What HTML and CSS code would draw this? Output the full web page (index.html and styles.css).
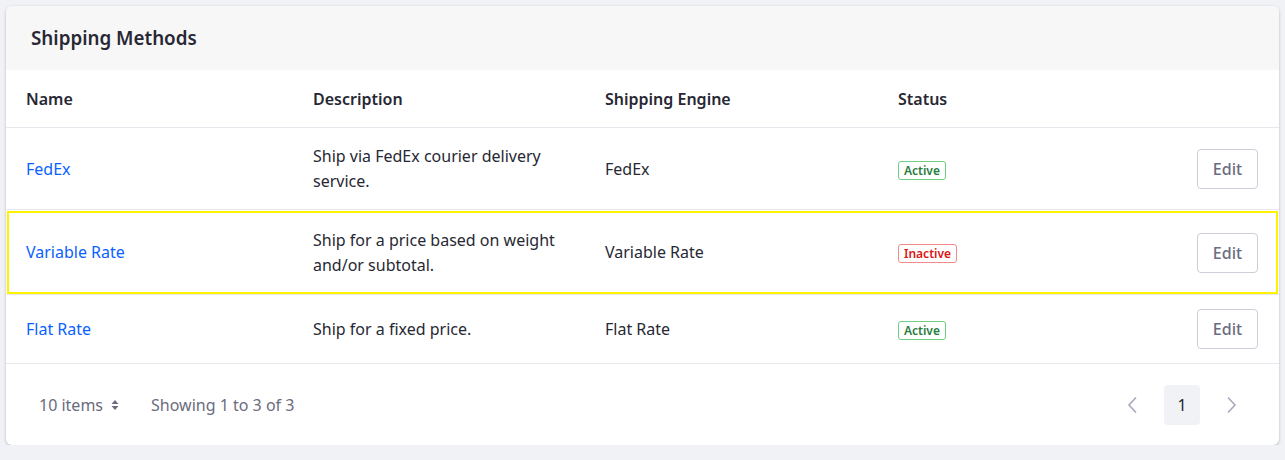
FILE: index.html
```html
<!DOCTYPE html>
<html lang="en">
<head>
<meta charset="utf-8">
<title>Shipping Methods</title>
<link rel="stylesheet" href="styles.css">
</head>
<body>
<div class="card">
  <div class="card-header">
    <h2 class="card-title">Shipping Methods</h2>
  </div>
  <div class="table">
    <div class="row row-head">
      <div class="cell">Name</div>
      <div class="cell">Description</div>
      <div class="cell">Shipping Engine</div>
      <div class="cell">Status</div>
      <div class="cell"></div>
    </div>
    <div class="row row-tall">
      <div class="cell"><a class="link" href="#">FedEx</a></div>
      <div class="cell">Ship via FedEx courier delivery service.</div>
      <div class="cell">FedEx</div>
      <div class="cell"><span class="badge badge-success">Active</span></div>
      <div class="cell cell-action"><button class="btn">Edit</button></div>
    </div>
    <div class="row row-tall row-focus">
      <div class="cell"><a class="link" href="#">Variable Rate</a></div>
      <div class="cell">Ship for a price based on weight and/or subtotal.</div>
      <div class="cell">Variable Rate</div>
      <div class="cell"><span class="badge badge-danger">Inactive</span></div>
      <div class="cell cell-action"><button class="btn">Edit</button></div>
    </div>
    <div class="row row-short">
      <div class="cell"><a class="link" href="#">Flat Rate</a></div>
      <div class="cell">Ship for a fixed price.</div>
      <div class="cell">Flat Rate</div>
      <div class="cell"><span class="badge badge-success">Active</span></div>
      <div class="cell cell-action"><button class="btn">Edit</button></div>
    </div>
  </div>
  <div class="card-footer">
    <div class="footer-left">
      <span class="items">10 items
        <svg class="caret" width="8" height="12" viewBox="0 0 8 12"><path d="M4 1 L7.5 5 H0.5 Z M4 11 L0.5 7 H7.5 Z" fill="#6b6c7e"/></svg>
      </span>
      <span class="showing">Showing 1 to 3 of 3</span>
    </div>
    <div class="pagination">
      <span class="page-nav">
        <svg width="14" height="20" viewBox="0 0 14 20"><path d="M11 2.5 L4 10 L11 17.5" fill="none" stroke="#a7a9bc" stroke-width="1.6"/></svg>
      </span>
      <span class="page-item">1</span>
      <span class="page-nav">
        <svg width="14" height="20" viewBox="0 0 14 20"><path d="M3 2.5 L10 10 L3 17.5" fill="none" stroke="#a7a9bc" stroke-width="1.6"/></svg>
      </span>
    </div>
  </div>
</div>
</body>
</html>
```

FILE: styles.css
```css
* { box-sizing: border-box; }
html, body { margin: 0; padding: 0; }
body {
  background: #f1f2f5;
  font-family: "Noto Sans", "Open Sans", sans-serif;
  font-size: 16px;
  color: #272833;
  padding: 6px 6px 0 6px;
}
.card {
  background: #fff;
  border-radius: 6px;
  box-shadow: 0 1px 3px rgba(0,0,0,0.25);
  overflow: hidden;
  width: 1273px;
}
.card-header {
  background: #f7f7f8;
  height: 64px;
  display: flex;
  align-items: center;
  padding: 0 25px;
}
.card-title {
  margin: 0;
  font-size: 18.8px;
  font-weight: 600;
  color: #272833;
}
.row {
  display: grid;
  grid-template-columns: 287px 292px 293px 1fr auto;
  align-items: center;
  border-bottom: 1px solid #e7e7ed;
}
.cell {
  padding: 0 20px;
  line-height: 25px;
}
.row-head { height: 58px; font-weight: 600; padding-top: 1px; }
.row-tall { height: 82px; padding-top: 1px; }
.row-focus { height: 85px; outline: 2px solid #fff200; outline-offset: -3px; }
.row-short { height: 69px; }
.cell-action { display: flex; justify-content: flex-end; }
.link { color: #0b5fff; text-decoration: none; }
.badge {
  display: inline-block;
  font-size: 12px;
  font-weight: 600;
  line-height: 17px;
  padding: 0 5px;
  border: 1px solid;
  border-radius: 3px;
}
.badge-success { color: #287d3c; border-color: #6ccf84; }
.badge-danger { color: #da1414; border-color: #f48989; }
.btn {
  font-family: inherit;
  font-size: 16px;
  color: #6b6c7e;
  background: #fff;
  border: 1px solid #cdced9;
  border-radius: 4px;
  height: 40px;
  width: 61px;
  padding: 0;
  font-weight: 500;
  margin-right: 1px;
}
.card-footer {
  height: 81px;
  display: flex;
  align-items: center;
  justify-content: space-between;
  padding: 0 40px 0 33px;
  color: #6b6c7e;
}
.footer-left { display: flex; align-items: center; gap: 32px; }
.items { display: inline-flex; align-items: center; gap: 8px; }
.pagination { display: flex; align-items: center; gap: 25px; }
.page-nav { display: inline-flex; width: 14px; justify-content: center; }
.page-item {
  display: inline-flex;
  align-items: center;
  justify-content: center;
  width: 36px;
  height: 40px;
  background: #f1f2f5;
  border-radius: 4px;
  color: #272833;
}
```
